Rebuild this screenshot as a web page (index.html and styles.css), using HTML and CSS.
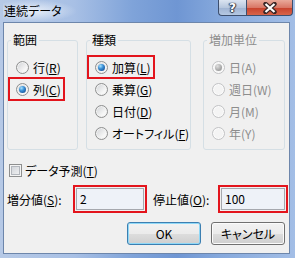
FILE: index.html
```html
<!DOCTYPE html>
<html lang="ja">
<head>
    <meta charset="UTF-8">
    <meta name="viewport" content="width=device-width, initial-scale=1.0">
    <title>連続データ</title>
    <link rel="stylesheet" href="styles.css">
</head>
<body>
    <div class="window">
        <!-- Title bar -->
        <div class="titlebar">
            <span class="title">連続データ</span>
            <div class="caption-buttons">
                <span class="cap-btn help">?</span>
                <span class="cap-btn close">
                    <svg width="14" height="12" viewBox="0 0 14 12">
                        <path d="M2.5 2 L11.5 10 M11.5 2 L2.5 10" stroke="#3a2626" stroke-width="4.4" stroke-linecap="round" fill="none"/>
                        <path d="M2.5 2 L11.5 10 M11.5 2 L2.5 10" stroke="#ffffff" stroke-width="2.2" fill="none"/>
                    </svg>
                </span>
            </div>
        </div>

        <!-- Dialog body -->
        <div class="client">
            <div class="groups">
                <fieldset class="group g-range">
                    <legend>範囲</legend>
                    <label class="opt"><span class="radio"></span>行(<u>R</u>)</label>
                    <label class="opt mark"><span class="radio on"></span>列(<u>C</u>)</label>
                </fieldset>

                <fieldset class="group g-type">
                    <legend>種類</legend>
                    <label class="opt mark"><span class="radio on"></span>加算(<u>L</u>)</label>
                    <label class="opt"><span class="radio"></span>乗算(<u>G</u>)</label>
                    <label class="opt"><span class="radio"></span>日付(<u>D</u>)</label>
                    <label class="opt"><span class="radio"></span>オートフィル(<u>F</u>)</label>
                </fieldset>

                <fieldset class="group g-step disabled">
                    <legend>増加単位</legend>
                    <label class="opt"><span class="radio on"></span>日(A)</label>
                    <label class="opt"><span class="radio"></span>週日(W)</label>
                    <label class="opt"><span class="radio"></span>月(M)</label>
                    <label class="opt"><span class="radio"></span>年(Y)</label>
                </fieldset>
            </div>

            <label class="check-row"><span class="checkbox"></span>データ予測(<u>T</u>)</label>

            <div class="values">
                <span class="value-label">増分値(<u>S</u>):</span>
                <span class="textbox mark step-box">2</span>
                <span class="value-label stop-label">停止値(<u>O</u>):</span>
                <span class="textbox mark stop-box">100</span>
            </div>

            <div class="buttons">
                <span class="btn default">OK</span>
                <span class="btn">キャンセル</span>
            </div>
        </div>
    </div>
</body>
</html>
```

FILE: styles.css
```css
:root {
    --face-color: #f0f0f0;
    --group-border: #d5dfe5;
    --mark-color: #e3141c;
    --disabled-text: #8d8d8d;
}

* {
    box-sizing: border-box;
}

body {
    margin: 0;
    font-family: "Noto Sans CJK JP", "Noto Sans", sans-serif;
    font-size: 12px;
    font-feature-settings: "palt";
    color: #000;
}

.window {
    width: 295px;
    height: 258px;
    display: flex;
    flex-direction: column;
    background: linear-gradient(90deg, #b6c9e6 0%, #a8c0e5 25%, #7fa3d9 45%, #6f96d3 60%, #85a8dc 74%, #a3bee6 100%);
}

/* Title bar */
.titlebar {
    height: 22px;
    display: flex;
    justify-content: space-between;
    align-items: flex-start;
    padding: 0 2px 0 3px;
}

.title {
    padding: 3px 14px 3px 1px;
    line-height: 16px;
    background: radial-gradient(ellipse at 40% 50%, rgba(238, 243, 250, 0.9) 0%, rgba(238, 243, 250, 0) 72%);
}

.caption-buttons {
    display: flex;
}

.cap-btn {
    height: 16px;
    display: flex;
    align-items: center;
    justify-content: center;
    border: 1px solid #3d4f6e;
    border-top: none;
}

.help {
    width: 28px;
    border-radius: 0 0 0 4px;
    border-right: none;
    background: linear-gradient(#dbe4f1, #b7c7de 50%, #9fb3d2 51%, #b5c8e2);
    color: #fff;
    font-family: "DejaVu Sans", sans-serif;
    font-weight: bold;
    font-size: 12px;
    text-shadow: 0 0 1px #2b3648, 1px 0 1px #2b3648, -1px 0 1px #2b3648, 0 1px 1px #2b3648;
}

.close {
    width: 47px;
    border-radius: 0 0 4px 0;
    background: linear-gradient(#e9a99a, #d97766 50%, #c7402b 51%, #d8654a);
}

/* Client area */
.client {
    flex: 1;
    margin: 0 5px 4px 3px;
    border: 1px solid #6d86ab;
    background: var(--face-color);
    padding: 10px 4px 8px 3px;
    display: flex;
    flex-direction: column;
}

.groups {
    display: flex;
}

.group {
    margin: 0;
    padding: 9px 0 0;
    height: 117px;
    min-width: 0;
    border: 1px solid var(--group-border);
    border-radius: 3px;
    display: flex;
    flex-direction: column;
    align-items: flex-start;
}

.group legend {
    margin-left: 3px;
    padding: 0 2px;
    line-height: 14px;
}

.g-range {
    width: 71px;
}

.g-type {
    width: 105px;
    margin-left: 8px;
}

.g-step {
    width: 82px;
    margin-left: 12px;
}

.disabled {
    color: var(--disabled-text);
}

.opt {
    display: flex;
    align-items: center;
    height: 22px;
    padding: 0 4px 0 8px;
    white-space: nowrap;
}

.opt.mark {
    height: 24px;
    margin: -1px 0;
    outline: 2px solid var(--mark-color);
    outline-offset: -2px;
}

u {
    text-underline-offset: 1px;
}

/* Radio buttons */
.radio {
    flex: none;
    width: 13px;
    height: 13px;
    margin-right: 4px;
    border-radius: 50%;
    border: 1px solid #8e8f8f;
    background: linear-gradient(135deg, #cfd1d4, #f7f7f7 70%);
    box-shadow: inset 0 0 0 1px #f2f2f2;
    display: flex;
    align-items: center;
    justify-content: center;
}

.radio.on::after {
    content: "";
    width: 7px;
    height: 7px;
    border-radius: 50%;
    background: radial-gradient(circle at 35% 30%, #a8e4ff 0, #3a8fd6 40%, #0c3c7e 100%);
}

.disabled .radio {
    border-color: #c2c3c5;
    background: #f4f4f4;
    box-shadow: inset 0 0 0 1px #fbfbfb;
}

.disabled .radio.on::after {
    background: radial-gradient(circle at 35% 30%, #e0e0e0 0, #a8a8a8 60%, #8c8c8c 100%);
}

/* Checkbox row */
.check-row {
    margin-top: 12px;
    height: 16px;
    display: flex;
    align-items: center;
    white-space: nowrap;
}

.checkbox {
    flex: none;
    width: 13px;
    height: 13px;
    margin: 0 3px 0 2px;
    border: 1px solid #8e8f8f;
    background: linear-gradient(135deg, #cbcfd5, #f6f6f6);
    box-shadow: inset 0 0 0 1px #f4f4f4, inset 0 0 0 2px #b3b7bd;
}

/* Value inputs */
.values {
    margin-top: 10px;
    display: flex;
    align-items: center;
}

.value-label {
    white-space: nowrap;
}

.value-label:first-child {
    width: 69px;
}

.stop-label {
    width: 68px;
    margin-left: 9px;
}

.textbox {
    height: 22px;
    line-height: 20px;
    padding: 0 3px;
    border: 1px solid #a5a8ae;
    background: #eef2f8;
}

.textbox.mark {
    outline: 2px solid var(--mark-color);
    outline-offset: 1px;
}

.step-box {
    width: 68px;
}

.stop-box {
    width: 64px;
}

/* Dialog buttons */
.buttons {
    margin-top: 12px;
    display: flex;
    justify-content: flex-end;
    gap: 10px;
}

.btn {
    width: 74px;
    height: 23px;
    display: flex;
    align-items: center;
    justify-content: center;
    border: 1px solid #707070;
    border-radius: 3px;
    background: linear-gradient(#f2f2f2 0%, #ebebeb 50%, #dddddd 51%, #cfcfcf 100%);
    box-shadow: inset 0 0 0 1px #fbfbfb;
}

.btn.default {
    border-color: #3c7fb1;
    box-shadow: inset 0 0 0 1px #8fd8f7;
}
```
